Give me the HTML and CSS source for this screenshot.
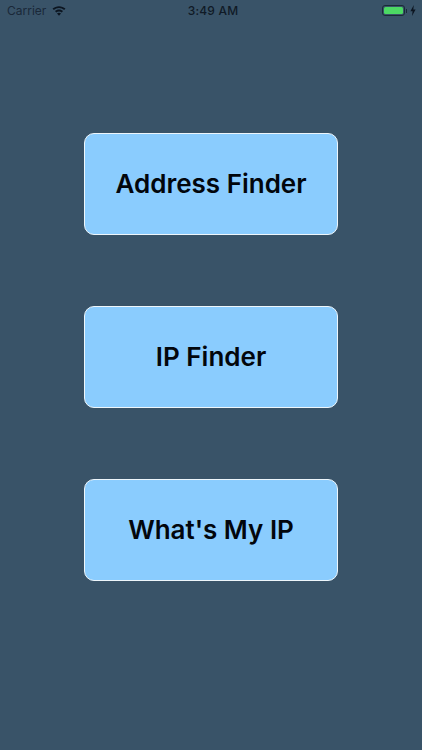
FILE: index.html
```html
<!DOCTYPE html>
<html lang="en">
<head>
<meta charset="utf-8">
<title>IP Tools</title>
<link rel="stylesheet" href="styles.css">
</head>
<body>
<div class="screen">
  <header class="status">
    <div class="status-side">
      <span class="carrier">Carrier</span>
      <svg class="wifi" viewBox="0 0 16 12" aria-hidden="true">
        <path d="M8 1C5.2 1 2.6 2 .6 3.8l1.5 1.7C3.7 4 5.8 3.2 8 3.2s4.3.8 5.9 2.3l1.5-1.7C13.4 2 10.8 1 8 1z"/>
        <path d="M8 4.8c-1.8 0-3.4.6-4.6 1.8l1.5 1.6C5.7 7.4 6.8 7 8 7s2.3.4 3.1 1.2l1.5-1.6C11.4 5.4 9.8 4.8 8 4.8z"/>
        <path d="M8 8.6c-.9 0-1.7.3-2.3.9L8 12l2.3-2.5c-.6-.6-1.4-.9-2.3-.9z"/>
      </svg>
    </div>
    <span class="time">3:49 AM</span>
    <div class="status-side status-right">
      <span class="battery"><span class="battery-fill"></span></span>
      <span class="battery-cap"></span>
      <svg class="bolt" viewBox="0 0 6 11" aria-hidden="true"><path d="M3.8 0 .4 6.2h2.2L2 11l3.6-6.6H3.3z"/></svg>
    </div>
  </header>
  <main class="menu">
    <button class="action">Address Finder</button>
    <button class="action">IP Finder</button>
    <button class="action">What's My IP</button>
  </main>
</div>
</body>
</html>
```
FILE: styles.css
```css
* { box-sizing: border-box; }
html, body { margin: 0; height: 100%; }
body { background: #395368; overflow: hidden; }
.screen { width: 422px; height: 750px; display: flex; flex-direction: column; font-family: Inter, "Liberation Sans", sans-serif; }
.status { height: 21px; flex: none; display: flex; align-items: center; justify-content: space-between; padding: 0 6px 0 7px; color: #101a26; }
.status-side { width: 140px; display: flex; align-items: center; }
.status-right { justify-content: flex-end; }
.carrier { font-size: 12px; color: #1a2838; }
.wifi { width: 14px; height: 11px; margin-left: 6px; fill: #0c1520; }
.time { font-size: 12px; font-weight: 500; letter-spacing: .2px; color: #101a26; margin-left: 3px; }
.battery { width: 23px; height: 11px; border: 1px solid #1a2b36; border-radius: 3px; padding: 1px; display: flex; }
.battery-fill { flex: 1; background: #4cd964; border-radius: 1.5px; }
.battery-cap { width: 1.5px; height: 4px; background: #1a2b36; margin-left: 1px; }
.bolt { width: 6px; height: 11px; margin-left: 3px; fill: #0c1520; }
.menu { display: flex; flex-direction: column; align-items: center; gap: 71px; padding-top: 112px; }
.action { width: 254px; height: 102px; background: #8accfe; border: 1px solid #eef6fb; border-radius: 10px; color: #02060c; font-family: inherit; font-size: 26px; font-weight: 600; padding: 0 0 1px; }
```
